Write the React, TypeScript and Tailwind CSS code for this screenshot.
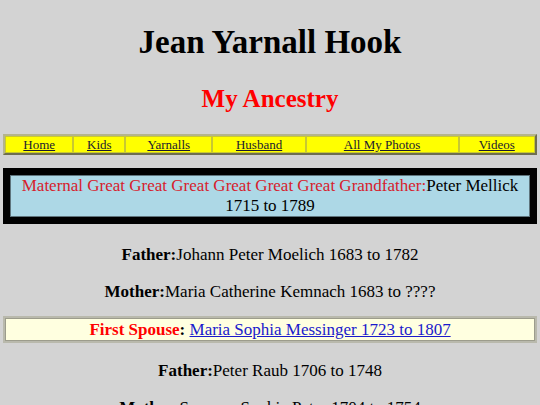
import React from "react";

const navLinks = [
  { label: "Home", w: "w-[69px]" },
  { label: "Kids", w: "w-[52px]" },
  { label: "Yarnalls", w: "w-[88px]" },
  { label: "Husband", w: "w-[94px]" },
  { label: "All My Photos", w: "w-[154px]" },
  { label: "Videos", w: "w-[77px]" },
];

function Parent({ label, text }: { label: string; text: string }) {
  return (
    <p className="text-center text-[17px] leading-[20px] text-black">
      <b>{label}</b>
      {text}
    </p>
  );
}

export default function App() {
  return (
    <div className="min-h-screen bg-[#d3d3d3] font-['Liberation_Serif','Times_New_Roman',serif] overflow-hidden">
      <h1 className="pt-[24px] text-center text-[33px] leading-[37px] font-bold text-black">
        Jean Yarnall Hook
      </h1>
      <h2 className="mt-[24px] text-center text-[25px] leading-[28px] font-bold text-[#ff0000]">
        My Ancestry
      </h2>

      {/* menu */}
      <div className="mx-auto mt-[21px] flex w-[534px] border-2 border-t-[#b4b48c] border-l-[#b4b48c] border-r-[#6e6e50] border-b-[#6e6e50] bg-[#ffff00]">
        {navLinks.map((l) => (
          <div
            key={l.label}
            className={`${l.w} text-center text-[13px] leading-[15px] border border-[#c8c832]`}
          >
            <a href="#" className="text-[#1a1a30] underline">
              {l.label}
            </a>
          </div>
        ))}
      </div>

      {/* current ancestor */}
      <div className="mx-auto mt-[13px] w-[534px] border-[7px] border-black">
        <div className="border border-[#5f747c] bg-[#add8e6] text-center text-[17px] leading-[20px]">
          <span className="text-[#d7202c]">
            Maternal Great Great Great Great Great Great Grandfather:
          </span>
          <span className="text-black">Peter Mellick 1715 to 1789</span>
        </div>
      </div>

      <div className="mt-[21px] flex flex-col gap-[17px]">
        <Parent label="Father:" text="Johann Peter Moelich 1683 to 1782" />
        <Parent label="Mother:" text="Maria Catherine Kemnach 1683 to ????" />
      </div>

      {/* spouse */}
      <div className="mx-auto mt-[14px] w-[534px] border-2 border-[#b9b9ac]">
        <div className="border border-[#9c9c8c] bg-[#ffffe0] py-[1px] text-center text-[17px] leading-[19px]">
          <b className="text-[#ff0000]">First Spouse</b>
          <b className="text-black">: </b>
          <a href="#" className="text-[#1a1acc] underline">
            Maria Sophia Messinger 1723 to 1807
          </a>
        </div>
      </div>

      <div className="mt-[18px] flex flex-col gap-[17px]">
        <Parent label="Father:" text="Peter Raub 1706 to 1748" />
        <Parent label="Mother:" text="Susanna Sophia Peter 1704 to 1754" />
      </div>
    </div>
  );
}
